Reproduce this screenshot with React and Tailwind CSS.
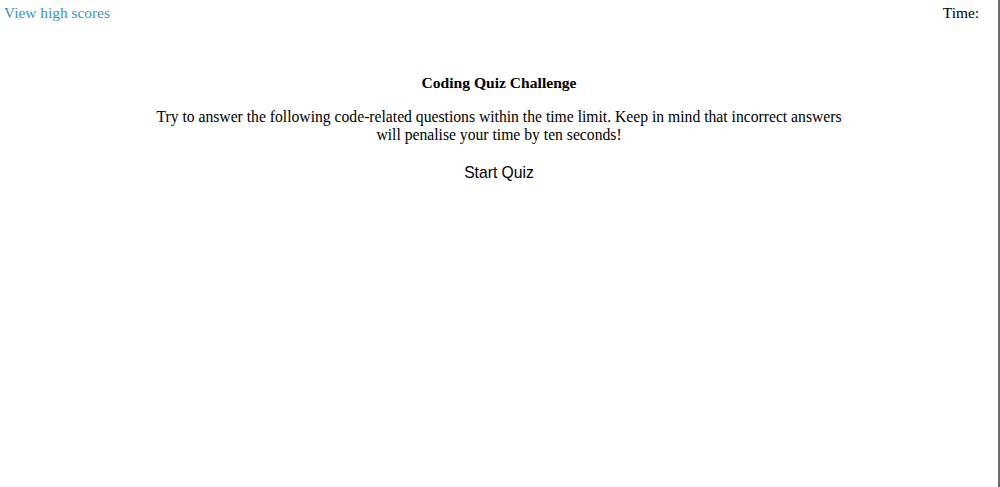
export default function App() {
  return (
    <div className="w-full h-[487px] bg-white border-r-2 border-[#6b6b6b] text-black" style={{ fontFamily: '"Liberation Serif", "Times New Roman", serif' }}>
      <div className="flex justify-between pl-[4px] pr-[19px] pt-[4px] text-[15.4px] leading-[18px]">
        <a href="#" className="text-[#3a8fd0]">View high scores</a>
        <span>Time:</span>
      </div>
      <div className="flex flex-col items-center">
        <h1 className="mt-[52px] text-[15.6px] leading-[18px] font-bold">Coding Quiz Challenge</h1>
        <p className="mt-[16px] w-[700px] text-center text-[15.67px] leading-[18px]">
          Try to answer the following code-related questions within the time limit. Keep in mind that incorrect answers will penalise your time by ten seconds!
        </p>
        <button className="mt-[20px] text-[15.7px] leading-[18px] bg-transparent" style={{ fontFamily: '"Liberation Sans", Arial, sans-serif' }}>
          Start Quiz
        </button>
      </div>
    </div>
  );
}
